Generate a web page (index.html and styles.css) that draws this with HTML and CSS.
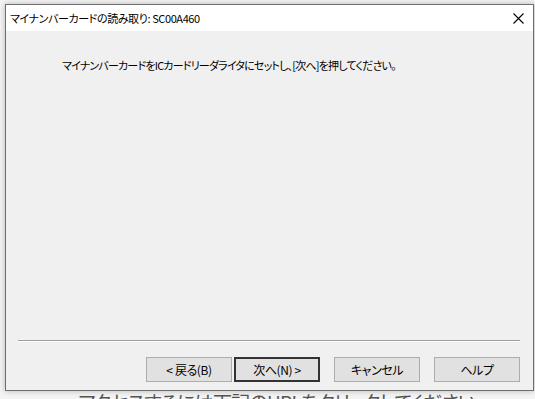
FILE: index.html
```html
<!DOCTYPE html>
<html lang="ja">
<head>
    <meta charset="UTF-8">
    <meta name="viewport" content="width=device-width, initial-scale=1.0">
    <title>マイナンバーカードの読み取り</title>
    <link rel="stylesheet" href="styles.css">
</head>
<body>

<!-- 後ろのページ -->
<div class="page">
    <p class="page-text">アクセスするには下記のURLをクリックしてください</p>
</div>

<!-- ダイアログ -->
<div class="dialog">
    <div class="titlebar">
        <span class="title">マイナンバーカードの読み取り: SC00A460</span>
        <span class="close">
            <svg width="11" height="11" viewBox="0 0 11 11">
                <path d="M0.5 0.5 L10.5 10.5 M10.5 0.5 L0.5 10.5" stroke="#000" stroke-width="1.1" fill="none"/>
            </svg>
        </span>
    </div>
    <div class="content">
        <p class="message">マイナンバーカードをICカードリーダライタにセットし、[次へ]を押してください。</p>
    </div>
    <div class="footer">
        <div class="separator"></div>
        <div class="buttons">
            <div class="nav">
                <button class="btn">&lt; 戻る(B)</button>
                <button class="btn default">次へ(N) &gt;</button>
            </div>
            <button class="btn">キャンセル</button>
            <button class="btn">ヘルプ</button>
        </div>
    </div>
</div>

</body>
</html>
```

FILE: styles.css
```css
body {
    margin: 0;
    width: 535px;
    height: 399px;
    overflow: hidden;
    position: relative;
    background-color: #f4f4f4;
    font-family: "Noto Sans CJK JP", "Noto Sans", sans-serif;
    font-feature-settings: "palt";
    color: #000;
}
.page {
    padding-top: 388px;
    padding-left: 78px;
}
.page-text {
    margin: 0;
    font-size: 19px;
    color: #555;
    white-space: nowrap;
    letter-spacing: -0.7px;
}
.dialog {
    position: absolute;
    left: 5px;
    top: 4px;
    width: 527px;
    height: 385px;
    border: 1px solid #6e6e6e;
    background-color: #f0f0f0;
    box-shadow: 0 0 6px rgba(0, 0, 0, 0.25);
    display: flex;
    flex-direction: column;
}
.titlebar {
    height: 26px;
    background-color: #fff;
    display: flex;
    align-items: center;
    justify-content: space-between;
    padding-left: 4px;
    padding-right: 9px;
}
.title {
    font-size: 11px;
    letter-spacing: -0.4px;
}
.close {
    display: flex;
    align-items: center;
}
.content {
    flex: 1;
    padding: 26px 0 0 56px;
}
.message {
    margin: 0;
    font-size: 11px;
    letter-spacing: -0.8px;
}
.footer {
    padding: 0 13px 8px 12px;
}
.separator {
    height: 1px;
    background-color: #a0a0a0;
    border-bottom: 1px solid #fff;
    margin-bottom: 15px;
}
.buttons {
    display: flex;
    justify-content: flex-end;
    gap: 14px;
}
.nav {
    display: flex;
    gap: 2px;
}
.btn {
    width: 86px;
    height: 25px;
    margin: 0;
    padding: 0;
    font-family: "Noto Sans CJK JP", "Noto Sans", sans-serif;
    font-feature-settings: "palt";
    font-size: 12px;
    letter-spacing: -0.4px;
    color: #000;
    background-color: #e1e1e1;
    border: 1px solid #adadad;
}
.btn.default {
    border: 2px solid #333;
}
```
